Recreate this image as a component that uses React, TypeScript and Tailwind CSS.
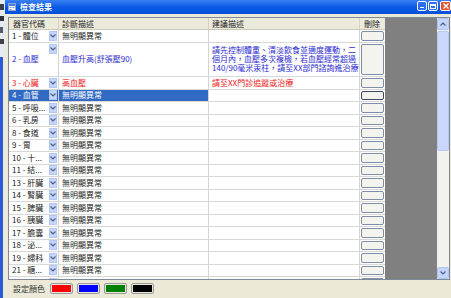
import React from 'react';

type Row = {
  code: string;
  diag: string;
  adv?: string[];
  tone?: 'blue' | 'red';
  tall?: boolean;
  selected?: boolean;
};

const rows: Row[] = [
  { code: '1 - 體位', diag: '無明顯異常' },
  {
    code: '2 - 血壓',
    diag: '血壓升高(舒張壓90)',
    adv: ['請先控制體重、清淡飲食並適度運動，二', '個月內，血壓多次複檢，若血壓經常超過', '140/90毫米汞柱，請至XX部門諮詢進治療'],
    tone: 'blue',
    tall: true,
  },
  { code: '3 - 心臟', diag: '高血壓', adv: ['請至XX門診追蹤或治療'], tone: 'red' },
  { code: '4 - 血管', diag: '無明顯異常', selected: true },
  { code: '5 - 呼吸...', diag: '無明顯異常' },
  { code: '6 - 乳房', diag: '無明顯異常' },
  { code: '8 - 食道', diag: '無明顯異常' },
  { code: '9 - 胃', diag: '無明顯異常' },
  { code: '10 - 十...', diag: '無明顯異常' },
  { code: '11 - 結...', diag: '無明顯異常' },
  { code: '13 - 肝臟', diag: '無明顯異常' },
  { code: '14 - 腎臟', diag: '無明顯異常' },
  { code: '15 - 脾臟', diag: '無明顯異常' },
  { code: '16 - 胰臟', diag: '無明顯異常' },
  { code: '17 - 膽囊', diag: '無明顯異常' },
  { code: '18 - 泌...', diag: '無明顯異常' },
  { code: '19 - 婦科', diag: '無明顯異常' },
  { code: '21 - 糖...', diag: '無明顯異常' },
  { code: '22 - 甲...', diag: '無明顯異常' },
];

const swatches = ['bg-[#ff0000]', 'bg-[#0000ff]', 'bg-[#008000]', 'bg-[#000000]'];

// small combo arrow used in the organ column
function DropArrow({ top }: { top?: boolean }) {
  return (
    <div
      className={`w-[8px] h-[10px] bg-[#c6d5fb] border border-[#b3c6f2] flex items-center justify-center shrink-0 ${
        top ? 'self-start mt-[1px]' : ''
      }`}
    >
      <svg width="6" height="4" viewBox="0 0 6 4">
        <path d="M0.5 0.5 L3 3 L5.5 0.5" fill="none" stroke="#4d6185" strokeWidth="1.2" />
      </svg>
    </div>
  );
}

function ScrollArrow({ down }: { down?: boolean }) {
  return (
    <div className="h-[12px] bg-[#c4d4fb] border border-[#b0c4f0] rounded-[2px] flex items-center justify-center">
      <svg width="6" height="4" viewBox="0 0 6 4">
        <path
          d={down ? 'M0.5 0.5 L3 3 L5.5 0.5' : 'M0.5 3.5 L3 1 L5.5 3.5'}
          fill="none"
          stroke="#4d6185"
          strokeWidth="1.2"
        />
      </svg>
    </div>
  );
}

function App() {
  return (
    <div className="relative w-[451px] h-[298px] overflow-hidden bg-[#ece9d8] font-['Noto_Sans_CJK_TC','Noto_Sans',sans-serif] text-[8px] leading-[10px] text-[#222]">
      {/* window */}
      <div className="flex flex-col h-full border-l-[3px] border-[#2a5bd6]">
        {/* title bar */}
        <div className="h-[14px] shrink-0 flex items-center bg-gradient-to-b from-[#3a80f3] via-[#0a5ae6] to-[#0650d8] pl-[5px]">
          <svg width="8" height="8" viewBox="0 0 8 8" className="shrink-0">
            <rect x="0.5" y="0.5" width="7" height="7" fill="#fff" stroke="#8aa6d8" />
            <rect x="1" y="1" width="6" height="2" fill="#4a7fe0" />
            <rect x="1.5" y="4" width="2" height="1" fill="#7a9ad0" />
            <rect x="1.5" y="6" width="2" height="1" fill="#7a9ad0" />
            <rect x="4.5" y="4" width="2" height="1" fill="#7a9ad0" />
          </svg>
          <span className="ml-[4px] text-white font-bold">檢查結果</span>
          <div className="ml-auto flex items-center gap-[1px] self-start mt-[1px]">
            <div className="w-[10px] h-[10px] rounded-[2px] border border-white bg-[#2f6df0] flex items-end justify-start p-[2px]">
              <div className="w-[4px] h-[1.5px] bg-white" />
            </div>
            <div className="w-[10px] h-[10px] rounded-[2px] border border-white bg-[#2f6df0] flex items-center justify-center">
              <div className="w-[6px] h-[5px] border border-white border-t-2" />
            </div>
            <div className="w-[11px] h-[10px] ml-[1px] rounded-[2px] border border-white bg-[#e2552f] flex items-center justify-center">
              <svg width="6" height="6" viewBox="0 0 6 6">
                <path d="M0.5 0.5 L5.5 5.5 M5.5 0.5 L0.5 5.5" stroke="#fff" strokeWidth="1.4" />
              </svg>
            </div>
          </div>
        </div>

        {/* body */}
        <div className="flex-1 flex flex-col pl-[5px] pt-[3px]">
          {/* data grid */}
          <div className="h-[263px] w-[442px] border border-[#7f8a99] flex overflow-hidden bg-[#808080]">
            <div className="w-[376px] shrink-0 flex flex-col bg-white">
              {/* header */}
              <div className="h-[12px] shrink-0 flex bg-[#ebeadb] border-b border-[#cbc7b8]">
                <div className="w-[50px] pl-[4px] flex items-center border-r border-[#d6d2c2]">器官代碼</div>
                <div className="w-[150px] pl-[3px] flex items-center border-r border-[#d6d2c2]">診斷描述</div>
                <div className="w-[151px] pl-[3px] flex items-center border-r border-[#d6d2c2]">建議描述</div>
                <div className="w-[25px] pl-[4px] flex items-center">刪除</div>
              </div>
              {rows.map((r) => {
                const tone =
                  r.tone === 'blue' ? 'text-[#2c2cd0]' : r.tone === 'red' ? 'text-[#ee2020]' : 'text-[#222]';
                return (
                  <div
                    key={r.code}
                    className={`flex shrink-0 border-b border-[#d8d8d8] ${r.tall ? 'h-[34.5px]' : 'h-[12.5px]'}`}
                  >
                    <div
                      className={`w-[50px] shrink-0 flex items-center border-r border-[#d4d4d4] pl-[3px] pr-[1px] ${
                        r.selected ? 'bg-[#316ac5] text-white' : tone
                      }`}
                    >
                      <span className="flex-1 whitespace-nowrap">{r.code}</span>
                      <DropArrow top={r.tall} />
                    </div>
                    <div
                      className={`w-[150px] shrink-0 flex items-center border-r border-[#d4d4d4] pl-[3px] whitespace-nowrap ${
                        r.selected ? 'bg-[#316ac5] text-white' : tone
                      }`}
                    >
                      {r.diag}
                    </div>
                    <div
                      className={`w-[151px] shrink-0 border-r border-[#d4d4d4] pl-[3px] whitespace-nowrap flex flex-col ${tone} ${
                        r.tall ? 'pt-[2px] leading-[9px]' : 'justify-center'
                      }`}
                    >
                      {r.adv?.map((l) => (
                        <span key={l}>{l}</span>
                      ))}
                    </div>
                    <div className="w-[25px] shrink-0 p-[1px]">
                      <div
                        className={`h-full rounded-[2px] border bg-[#f4f3ee] ${
                          r.selected ? 'border-[#3c4a66]' : 'border-[#7d8ea6]'
                        }`}
                      />
                    </div>
                  </div>
                );
              })}
            </div>
            <div className="flex-1" />
            {/* vertical scrollbar */}
            <div className="w-[12px] shrink-0 flex flex-col bg-[#f3f2ec]">
              <ScrollArrow />
              <div className="mt-[1px] h-[120px] bg-[#c9d8fa] border border-[#b4c8f2] rounded-[2px]" />
              <div className="flex-1" />
              <ScrollArrow down />
            </div>
          </div>

          {/* colour settings */}
          <div className="flex-1 flex items-center pl-[5px] pb-[1px]">
            <span className="text-[#333] mr-[5px]">設定顏色</span>
            <div className="flex gap-[4px]">
              {swatches.map((c) => (
                <div key={c} className="w-[23px] h-[11px] rounded-[2px] border border-[#9a9a9a] bg-[#e8e6dc] p-[1px]">
                  <div className={`w-full h-full ${c}`} />
                </div>
              ))}
            </div>
          </div>
        </div>
      </div>

      {/* edge of another window peeking at the top left */}
      <div className="absolute left-0 top-0 w-[5px] h-[57px] bg-[#e4e9f2] flex flex-col gap-[6px] pt-[4px]">
        <div className="h-[6px] w-[4px] bg-[#3a3f4c]" />
        <div className="h-[5px] w-[4px] bg-[#2b313d]" />
        <div className="h-[6px] w-[3px] bg-[#555b68]" />
        <div className="h-[5px] w-[4px] bg-[#3c4250]" />
      </div>
    </div>
  );
}

export default App;
